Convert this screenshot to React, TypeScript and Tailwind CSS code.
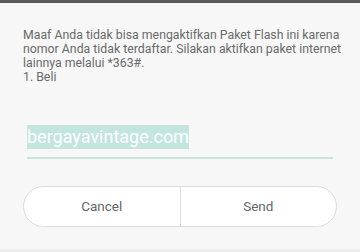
export default function App() {
  return (
    <div
      className="w-[360px] h-[252px] bg-[#f7f7f7] flex flex-col overflow-hidden"
      style={{ fontFamily: "Roboto, 'Noto Sans', sans-serif" }}
    >
      <div className="h-[3px] bg-[#5c5c5c] shrink-0" />
      <div className="pl-[23px] pt-[25px] text-[12.3px] leading-[14px] text-[#6a6a6a] whitespace-nowrap">
        <p>Maaf Anda tidak bisa mengaktifkan Paket Flash ini karena</p>
        <p>nomor Anda tidak terdaftar. Silakan aktifkan paket internet</p>
        <p>lainnya melalui *363#.</p>
        <p>1. Beli</p>
      </div>
      <div className="mt-[41px] ml-[27px] w-[306px]">
        <div className="h-[24px] flex items-center">
          <span className="bg-[#c3e5df] text-white text-[18px] leading-[24px] px-0">bergayavintage.com</span>
        </div>
        <div className="mt-[8px] h-[2px] bg-[#c9e2dc]" />
      </div>
      <div className="mt-[27px] mx-[23px] h-[41px] rounded-full border border-[#dcdcdc] bg-white flex text-[13.5px] text-[#666]">
        <div className="flex-1 flex items-center justify-center">Cancel</div>
        <div className="w-px bg-[#dcdcdc]" />
        <div className="flex-1 flex items-center justify-center">Send</div>
      </div>
      <div className="flex-1" />
      <div className="h-[3px] bg-[#ececec] shrink-0" />
    </div>
  );
}
